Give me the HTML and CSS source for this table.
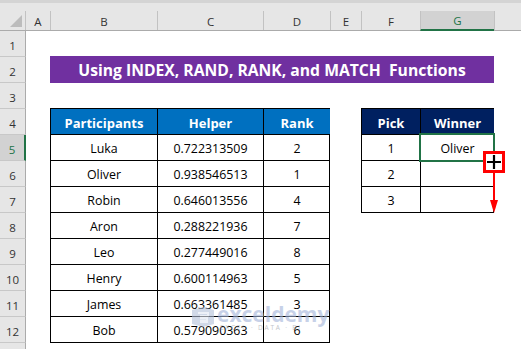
FILE: index.html
```html
<!DOCTYPE html>
<html>
<head>
<meta charset="utf-8">
<link rel="stylesheet" href="styles.css">
</head>
<body>
<div class="app">
  <div class="topband"></div>
  <div class="colheads">
    <div class="corner"><span class="tri"></span></div>
    <div class="ch col-a">A</div>
    <div class="ch col-b">B</div>
    <div class="ch col-c">C</div>
    <div class="ch col-d">D</div>
    <div class="ch col-e">E</div>
    <div class="ch col-f">F</div>
    <div class="ch col-g sel">G</div>
    <div class="ch col-h"></div>
  </div>
  <div class="body">
    <div class="rowheads">
      <div class="rh">1</div>
      <div class="rh">2</div>
      <div class="rh">3</div>
      <div class="rh">4</div>
      <div class="rh sel">5</div>
      <div class="rh">6</div>
      <div class="rh">7</div>
      <div class="rh">8</div>
      <div class="rh">9</div>
      <div class="rh">10</div>
      <div class="rh">11</div>
      <div class="rh">12</div>
      <div class="rh"></div>
    </div>
    <div class="sheet">
      <div class="title">Using INDEX, RAND, RANK, and MATCH  Functions</div>

      <div class="tbl tbl-main">
        <div class="th blue">Participants</div><div class="th blue">Helper</div><div class="th blue">Rank</div>
        <div class="td">Luka</div><div class="td">0.722313509</div><div class="td">2</div>
        <div class="td">Oliver</div><div class="td">0.938546513</div><div class="td">1</div>
        <div class="td">Robin</div><div class="td">0.646013556</div><div class="td">4</div>
        <div class="td">Aron</div><div class="td">0.288221936</div><div class="td">7</div>
        <div class="td">Leo</div><div class="td">0.277449016</div><div class="td">8</div>
        <div class="td">Henry</div><div class="td">0.600114963</div><div class="td">5</div>
        <div class="td">James</div><div class="td">0.663361485</div><div class="td">3</div>
        <div class="td">Bob</div><div class="td">0.579090363</div><div class="td">6</div>
      </div>

      <div class="tbl tbl-pick">
        <div class="th navy">Pick</div><div class="th navy">Winner</div>
        <div class="td">1</div><div class="td active">Oliver</div>
        <div class="td">2</div><div class="td"></div>
        <div class="td">3</div><div class="td"></div>
      </div>

      <div class="watermark">
        <svg class="wm-logo" width="24" height="20" viewBox="0 0 24 20">
          <path d="M1 3 L12 0 L23 3 L23 17 L12 20 L1 17 Z" fill="#b4c0da"/>
          <path d="M7 6 L17 6 L17 9 L10 9 L10 11 L16 11 L16 13.5 L10 13.5 L10 15 L17 15" fill="none" stroke="#e2e7f2" stroke-width="2"/>
        </svg>
        <div class="wm-text">
          <span class="wm-name">exceldemy</span>
          <span class="wm-sub">EXCEL · DATA · BI</span>
        </div>
      </div>

      <svg class="fillmark" width="28" height="66" viewBox="0 0 28 66">
        <rect x="2.5" y="2.5" width="19" height="19" fill="#ffffff" stroke="#ff0000" stroke-width="3"/>
        <path d="M12 5 V19 M5 12 H19" stroke="#000000" stroke-width="2.2"/>
        <path d="M12 23 V52" stroke="#ff0000" stroke-width="2"/>
        <path d="M8 50 L16 50 L12 63 Z" fill="#ff0000"/>
      </svg>
    </div>
  </div>
</div>
</body>
</html>
```

FILE: styles.css
```css
* { box-sizing: border-box; }
html, body { margin: 0; padding: 0; background: #ffffff; }
.app {
  width: 521px;
  height: 349px;
  overflow: hidden;
  background: #ffffff;
  font-family: "Open Sans", "Liberation Sans", sans-serif;
}
.topband {
  height: 11px;
  background: #e6e6e6;
  border-top: 3px solid #d4d4d4;
}
.colheads {
  display: flex;
  height: 20px;
  background: #e6e6e6;
  border-bottom: 1px solid #ababab;
}
.corner {
  width: 25px;
  position: relative;
}
.tri {
  position: absolute;
  right: 3px;
  bottom: 3px;
  width: 0;
  height: 0;
  border-left: 12px solid transparent;
  border-bottom: 12px solid #bcbcbc;
}
.ch {
  border-left: 1px solid #c2c2c2;
  display: flex;
  align-items: center;
  justify-content: center;
  font-size: 11.5px;
  color: #333333;
  padding-top: 1px;
}
.col-a { width: 25px; }
.col-b { width: 107px; }
.col-c { width: 106px; }
.col-d { width: 67px; }
.col-e { width: 31px; }
.col-f { width: 59px; }
.col-g { width: 74px; }
.col-h { flex: 1; }
.ch.sel {
  background: #d2d2d2;
  border-bottom: 2px solid #217346;
  color: #217346;
  margin-bottom: -1px;
}
.body {
  display: flex;
}
.rowheads {
  width: 26px;
  display: flex;
  flex-direction: column;
}
.rh {
  height: 26px;
  flex: none;
  background: #e6e6e6;
  border-right: 1px solid #ababab;
  border-bottom: 1px solid #c8c8c8;
  display: flex;
  align-items: center;
  justify-content: center;
  font-size: 11.5px;
  color: #333333;
  padding-top: 3px;
}
.rh.sel {
  background: #d2d2d2;
  border-right: 2px solid #217346;
  color: #217346;
}
.sheet {
  flex: 1;
  position: relative;
  display: grid;
  grid-template-columns: 24px 107px 106px 67px 31px 59px 74px 1fr;
  grid-template-rows: repeat(12, 26px) 1fr;
  height: 318px;
}
.title {
  grid-column: 2 / 8;
  grid-row: 2;
  margin-top: -1px;
  height: 27px;
  background: #7030a0;
  color: #ffffff;
  font-weight: 700;
  font-size: 15.7px;
  white-space: pre;
  display: flex;
  align-items: center;
  justify-content: center;
  padding-top: 1px;
}
.tbl {
  display: grid;
  align-self: start;
  margin-top: -1px;
  border-right: 1px solid #000000;
  border-bottom: 1px solid #000000;
  grid-auto-rows: 26px;
}
.tbl-main {
  grid-column: 2 / 5;
  grid-row: 4 / 13;
  grid-template-columns: 107px 106px 67px;
}
.tbl-pick {
  grid-column: 6 / 8;
  grid-row: 4 / 8;
  grid-template-columns: 59px 74px;
}
.th, .td {
  border-left: 1px solid #000000;
  border-top: 1px solid #000000;
  display: flex;
  align-items: center;
  justify-content: center;
  padding-top: 2px;
  font-size: 12.4px;
}
.th {
  color: #ffffff;
  font-weight: 700;
  font-size: 13px;
}
.th.blue { background: #0070c0; }
.th.navy { background: #002060; }
.td { color: #000000; }
.td.active { position: relative; }
.td.active::after {
  content: "";
  position: absolute;
  left: -2px;
  top: -2px;
  right: -1px;
  bottom: -2px;
  border: 2px solid #217346;
}
.watermark {
  position: absolute;
  left: 165px;
  top: 275px;
  display: flex;
  align-items: flex-start;
  gap: 2px;
  opacity: 0.6;
  pointer-events: none;
}
.wm-logo { margin-top: 1px; }
.wm-text {
  display: flex;
  flex-direction: column;
  line-height: 1;
}
.wm-name {
  font-family: "Open Sans", sans-serif;
  font-weight: 700;
  font-size: 21px;
  color: #a3b4da;
  line-height: 17px;
}
.wm-sub {
  font-size: 6.5px;
  color: #9aa0aa;
  letter-spacing: 1.8px;
  margin-top: 2px;
  margin-left: 3px;
}
.fillmark {
  position: absolute;
  left: 456px;
  top: 119px;
}
```
